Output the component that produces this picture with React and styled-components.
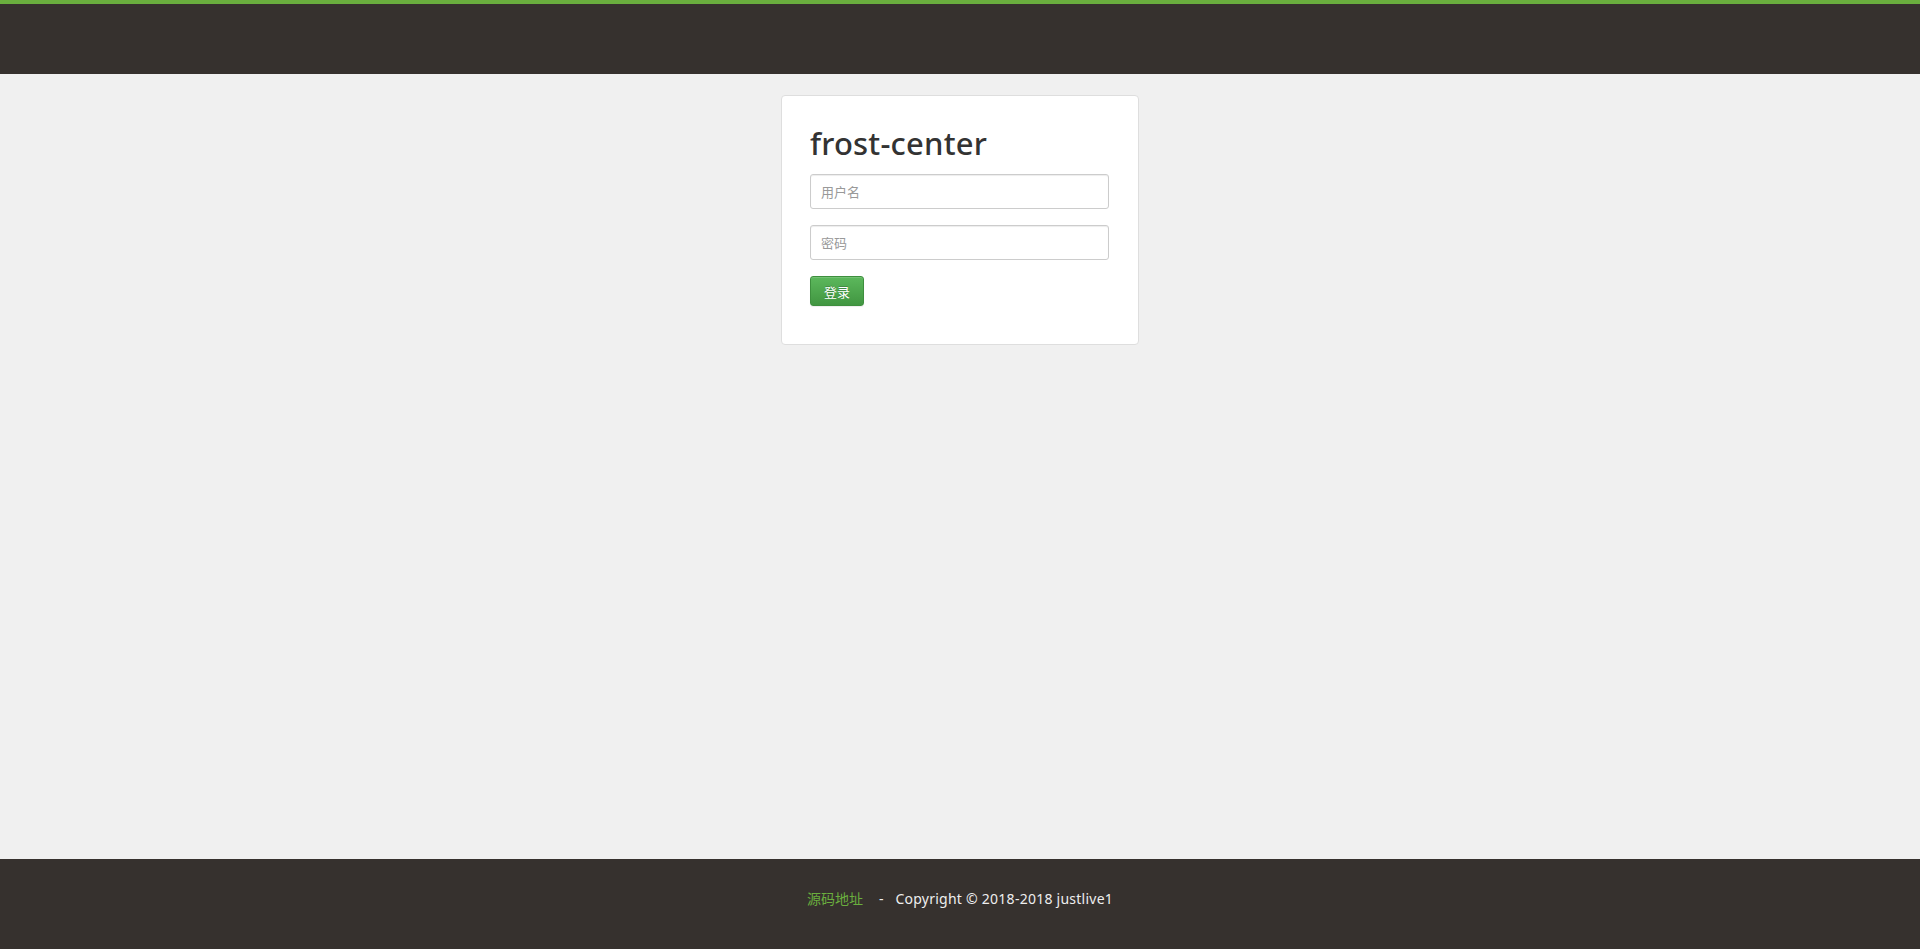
import React from 'react';
import styled, { createGlobalStyle } from 'styled-components';

const GlobalStyle = createGlobalStyle`
  html, body {
    margin: 0;
    padding: 0;
    background: #f0f0f0;
    font-family: "Noto Sans", "Noto Sans CJK SC", sans-serif;
  }
  * {
    box-sizing: border-box;
  }
`;

const Page = styled.div`
  min-height: 100vh;
  display: flex;
  flex-direction: column;
`;

const Header = styled.header`
  height: 74px;
  background: #36312e;
  border-top: 4px solid #6aae3e;
`;

const Main = styled.main`
  flex: 1;
  display: flex;
  justify-content: center;
  align-items: flex-start;
  padding-top: 21px;
`;

const Card = styled.form`
  width: 358px;
  background: #fff;
  border: 1px solid #dedede;
  border-radius: 4px;
  padding: 29px 29px 38px 28px;
  display: flex;
  flex-direction: column;
  align-items: flex-start;
`;

const Title = styled.h2`
  margin: 0 0 13px;
  font-size: 31px;
  line-height: 36px;
  font-weight: 500;
  color: #333;
  letter-spacing: 0.2px;
`;

const Input = styled.input`
  width: 299px;
  height: 35px;
  margin-bottom: 16px;
  padding: 0 10px;
  border: 1px solid #cccccc;
  border-radius: 3px;
  font-size: 13px;
  font-family: "Noto Sans", "Noto Sans CJK SC", sans-serif;
  color: #555;
  box-shadow: inset 0 1px 1px rgba(0, 0, 0, 0.075);
  outline: none;

  &::placeholder {
    color: #999;
  }
`;

const Button = styled.button`
  height: 30px;
  width: 54px;
  padding: 0;
  border: 1px solid #3e8f3e;
  border-radius: 3px;
  background: linear-gradient(to bottom, #5cb85c 0%, #419641 100%);
  color: #fff;
  font-size: 13px;
  font-family: "Noto Sans", "Noto Sans CJK SC", sans-serif;
  text-shadow: 0 -1px 0 rgba(0, 0, 0, 0.2);
  box-shadow: inset 0 1px 0 rgba(255, 255, 255, 0.15), 0 1px 1px rgba(0, 0, 0, 0.075);
  cursor: pointer;
`;

const Footer = styled.footer`
  height: 90px;
  background: #36312e;
  display: flex;
  justify-content: center;
  align-items: center;
  font-size: 14px;
  color: #eee;
  padding-bottom: 12px;
`;

const SourceLink = styled.a`
  color: #6aae3e;
  text-decoration: none;
`;

const Sep = styled.span`
  margin: 0 12px 0 16px;
`;

const Copy = styled.span`
  letter-spacing: 0.25px;
`;

export default function App() {
  return (
    <Page>
      <GlobalStyle />
      <Header />
      <Main>
        <Card onSubmit={(e) => e.preventDefault()}>
          <Title>frost-center</Title>
          <Input type="text" placeholder="用户名" />
          <Input type="password" placeholder="密码" />
          <Button type="submit">登录</Button>
        </Card>
      </Main>
      <Footer>
        <SourceLink href="#">源码地址</SourceLink>
        <Sep>-</Sep>
        <Copy>Copyright © 2018-2018 justlive1</Copy>
      </Footer>
    </Page>
  );
}
